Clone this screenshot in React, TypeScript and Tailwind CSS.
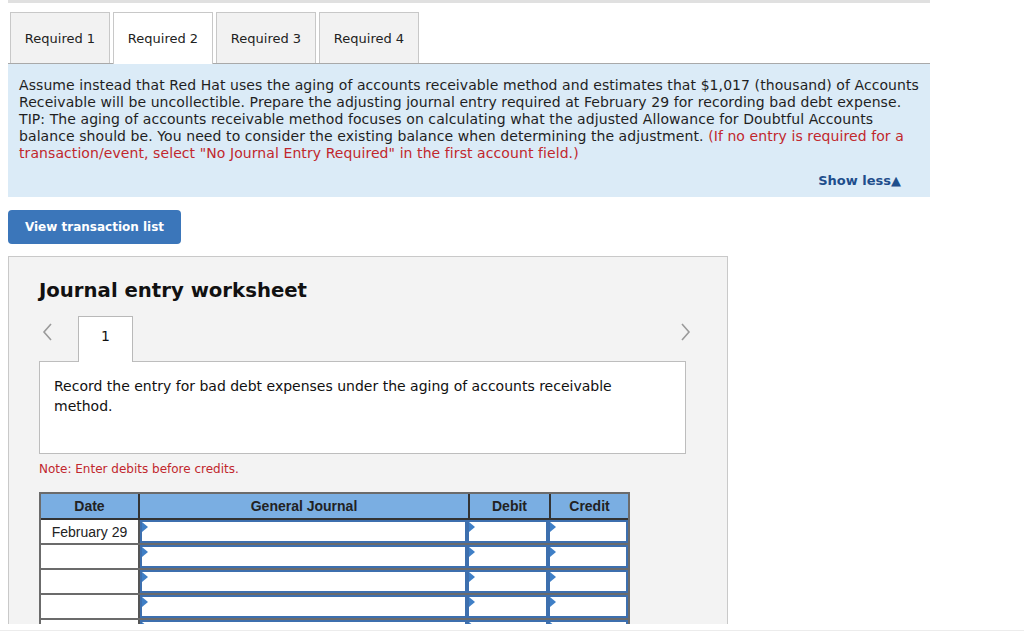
import React from 'react'

const tabs = ['Required 1', 'Required 2', 'Required 3', 'Required 4']

const verdana = "font-['DejaVu_Sans',Verdana,sans-serif]"
const arial = "font-['Liberation_Sans',Arial,sans-serif]"

function Flag() {
  return (
    <svg className="absolute left-0 top-0" width="6" height="10" viewBox="0 0 6 10">
      <path d="M0 0 L6 5 L0 10 Z" fill="#3f7fc6" />
    </svg>
  )
}

function InputCell({ w }: { w: string }) {
  return (
    <div className={`relative ${w} h-full border-2 border-[#3d6fae] bg-white`}>
      <Flag />
    </div>
  )
}

function JournalRow({ date }: { date?: string }) {
  return (
    <div className="flex h-[25px] border-b-2 border-[#6b6b6b]">
      <div className={`w-[99px] shrink-0 border-r-2 border-[#555] bg-white text-center text-[14px] leading-[25px] text-[#222] ${arial}`}>
        {date}
      </div>
      <InputCell w="w-[330px]" />
      <InputCell w="w-[81px]" />
      <InputCell w="w-[81px]" />
    </div>
  )
}

export default function App() {
  return (
    <div className={`h-[633px] overflow-hidden bg-white ${verdana}`}>
      <div className="h-[624px] overflow-hidden">
        <div className="ml-2 h-[3px] w-[922px] bg-[#e0e0e0]" />

        {/* Tabs */}
        <div className="ml-[10px] mt-[9px] flex gap-[3px]">
          {tabs.map((t, i) => (
            <div
              key={t}
              className={`flex h-[51px] w-[100px] items-center justify-center border border-b-0 border-[#c8c8c8] pt-px text-[13px] text-[#222] ${
                i === 1 ? 'relative z-10 h-[52px] -mb-px bg-white' : 'bg-[#f2f2f2]'
              }`}
            >
              {t}
            </div>
          ))}
        </div>

        {/* Question */}
        <div className="ml-2 w-[922px] border-t border-[#a9a9a9] bg-[#dbebf7] px-[11px] pb-[8px] pt-[13px]">
          <p className="text-[14px] leading-[17px] tracking-[0.08px] text-[#1f1f1f]">
            Assume instead that Red Hat uses the aging of accounts receivable method and estimates that $1,017 (thousand) of Accounts Receivable will be uncollectible. Prepare the adjusting journal entry required at February 29 for recording bad debt expense. TIP: The aging of accounts receivable method focuses on calculating what the adjusted Allowance for Doubtful Accounts balance should be. You need to consider the existing balance when determining the adjustment.{' '}
            <span className="text-[#c1272d]">
              (If no entry is required for a transaction/event, select "No Journal Entry Required" in the first account field.)
            </span>
          </p>
          <div className="mt-[11px] flex justify-end pr-[18px]">
            <span className="text-[13px] font-bold leading-[16px] text-[#1f4e8c]">Show less▲</span>
          </div>
        </div>

        <button className="ml-2 mt-[13px] h-[34px] w-[173px] rounded-[4px] bg-[#3b76ba] text-[12px] font-bold text-white">
          View transaction list
        </button>

        {/* Worksheet */}
        <div className="ml-2 mt-[12px] h-[400px] w-[720px] border border-[#c9c9c9] bg-[#f3f3f3] pl-[30px] pt-[22px]">
          <h2 className="text-[19.7px] font-bold leading-[24px] text-[#111]">Journal entry worksheet</h2>

          <div className="mt-[13px] flex h-[45px] w-[655px] items-start">
            <div className="mr-[23px] flex h-[32px] w-[16px] items-center justify-center">
              <svg width="10" height="18" viewBox="0 0 10 18">
                <path d="M9 1 L2 9 L9 17" stroke="#9a9a9a" strokeWidth="1.6" fill="none" />
              </svg>
            </div>
            <div className="relative z-10 flex h-[46px] w-[55px] justify-center border border-b-0 border-[#b9b9b9] bg-white pt-[9px] text-[14px] text-[#111]">
              1
            </div>
            <div className="flex-1" />
            <div className="flex h-[32px] w-[16px] items-center justify-center">
              <svg width="10" height="18" viewBox="0 0 10 18">
                <path d="M1 1 L8 9 L1 17" stroke="#9a9a9a" strokeWidth="1.6" fill="none" />
              </svg>
            </div>
          </div>

          <div className="h-[93px] w-[647px] border border-[#bdbdbd] bg-white px-[14px] pt-[14px]">
            <p className="text-[14px] leading-[20px] text-[#111]">
              Record the entry for bad debt expenses under the aging of accounts receivable
              <br />
              method.
            </p>
          </div>

          <p className="mt-[8px] text-[12px] leading-[15px] text-[#c1272d]">Note: Enter debits before credits.</p>

          {/* Table */}
          <div className="mt-[15px] w-[591px] border-x-2 border-t-2 border-[#6b6b6b]">
            <div className={`flex h-[26px] border-b-2 border-[#333] bg-[#7aaee2] text-[14px] font-bold text-[#222] ${arial}`}>
              <div className="flex w-[99px] shrink-0 items-center justify-center border-r-2 border-[#333]">Date</div>
              <div className="flex w-[330px] shrink-0 items-center justify-center border-r-2 border-[#333]">General Journal</div>
              <div className="flex w-[81px] shrink-0 items-center justify-center border-r-2 border-[#333]">Debit</div>
              <div className="flex flex-1 items-center justify-center">Credit</div>
            </div>
            <JournalRow date="February 29" />
            <JournalRow />
            <JournalRow />
            <JournalRow />
            <JournalRow />
          </div>
        </div>
      </div>
      <div className="mt-[6px] h-px bg-[#ececec]" />
    </div>
  )
}
